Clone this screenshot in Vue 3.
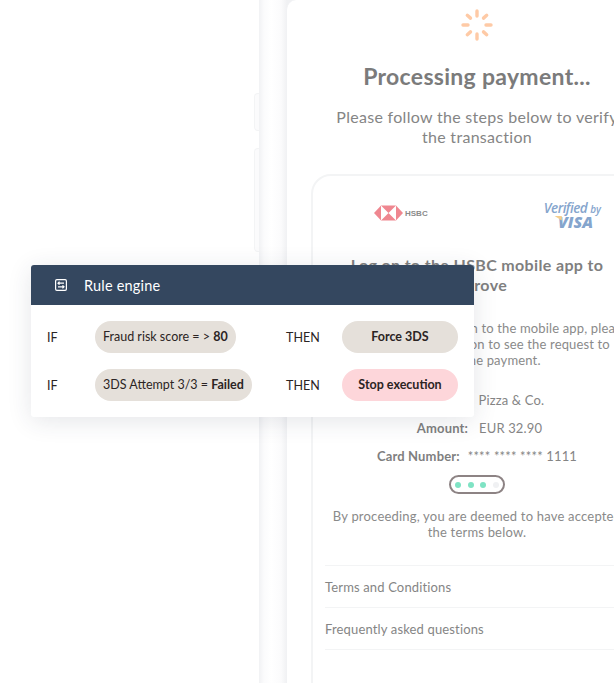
<template>
  <div class="stage">
    <div class="phone">
      <span class="side-btn side-btn-short"></span>
      <span class="side-btn side-btn-long"></span>
      <div class="screen">
        <svg class="spinner" width="32" height="32" viewBox="0 0 32 32" fill="none" stroke="#fecaa6" stroke-width="3.400" stroke-linecap="round">
          <path d="M16 2v5M16 25v5M2 16h5M25 16h5M6.300 6.300l3.200 2.800M22.500 22.900l3.200 2.800M25.700 6.300l-3.200 2.800M9.500 22.900l-3.200 2.800" />
        </svg>
        <h1 class="title">Processing payment...</h1>
        <p class="subtitle">Please follow the steps below to verify the transaction</p>

        <div class="card">
          <div class="logos">
            <div class="hsbc">
              <svg width="29" height="16" viewBox="0 0 29 16">
                <path fill="#ef8790" d="M0 8l7-7.500h15L29 8l-7 7.500H7z" />
                <path fill="#fff" d="M7 .5v15L14.500 8zM22 .5v15L14.500 8z" />
              </svg>
              <span class="hsbc-name">HSBC</span>
            </div>
            <div class="visa">
              <div class="visa-top">Verified <small>by</small></div>
              <div class="visa-name">VISA</div>
            </div>
          </div>

          <h2 class="card-title">Log on to the HSBC mobile app to approve</h2>
          <p class="card-text">
            When you have logged on to the mobile app, please<br />
            open up the notification to see the request to<br />
            approve the payment.
          </p>

          <dl class="details">
            <div class="detail"><dt>Merchant:</dt><dd>Pizza &amp; Co.</dd></div>
            <div class="detail detail-amount"><dt>Amount:</dt><dd>EUR 32.90</dd></div>
            <div class="detail"><dt>Card Number:</dt><dd>**** **** **** 1111</dd></div>
          </dl>

          <div class="progress">
            <i v-for="dot in dots" :key="dot.id" :class="['dot', { on: dot.on }]"></i>
          </div>

          <p class="terms-note">By proceeding, you are deemed to have accepted<br />the terms below.</p>

          <ul class="links">
            <li v-for="link in links" :key="link">{{ link }}</li>
          </ul>
        </div>
      </div>
    </div>

    <div class="rule-panel">
      <div class="rule-head">
        <svg width="14" height="14" viewBox="0 0 14 14" fill="none" stroke="#fff" stroke-width="1.200">
          <rect x="1.600" y="1.600" width="10.800" height="10.800" rx="1.300" />
          <path d="M4 5.200h6M5.500 3.700L4 5.200l1.500 1.500M10 8.800H4M8.500 7.300l1.500 1.500-1.500 1.500" />
        </svg>
        <span>Rule engine</span>
      </div>
      <div class="rule-body">
        <div v-for="rule in rules" :key="rule.condition" class="rule-row">
          <span class="word">IF</span>
          <span class="cond">{{ rule.condition }} <b>{{ rule.value }}</b></span>
          <span class="word">THEN</span>
          <span :class="['action', rule.tone]">{{ rule.action }}</span>
        </div>
      </div>
    </div>
  </div>
</template>

<script setup>
const dots = [
  { id: 1, on: true },
  { id: 2, on: true },
  { id: 3, on: true },
  { id: 4, on: false }
];

const links = ['Terms and Conditions', 'Frequently asked questions'];

const rules = [
  { condition: 'Fraud risk score = >', value: '80', action: 'Force 3DS', tone: 'neutral' },
  { condition: '3DS Attempt 3/3 =', value: 'Failed', action: 'Stop execution', tone: 'danger' }
];
</script>

<style>
html,
body {
  margin: 0;
  background: #fff;
}
</style>

<style scoped>
.stage {
  position: relative;
  width: 614px;
  height: 683px;
  overflow: hidden;
  background: #fff;
  font-family: "Lato", "Open Sans", sans-serif;
}

.phone {
  position: relative;
  width: 408px;
  height: 683px;
  margin-left: 259px;
  padding-left: 27px;
  box-sizing: border-box;
  background: linear-gradient(90deg, #f1f2f4 0, #fbfbfc 5px, #fff 12px, #fbfbfc 22px, #f0f1f3 28px);
}

.side-btn {
  position: absolute;
  left: -5px;
  width: 5px;
  box-sizing: border-box;
  border: 1px solid #f3f4f5;
  border-right: 0;
  border-radius: 4px 0 0 4px;
  background: #fbfbfc;
}

.side-btn-short {
  top: 93px;
  height: 38px;
}

.side-btn-long {
  top: 148px;
  height: 104px;
}

.screen {
  display: flex;
  flex-direction: column;
  align-items: center;
  height: 100%;
  box-sizing: border-box;
  padding: 9px 24px 0;
  background: #fff;
  border-left: 1px solid #f1f2f4;
  border-radius: 10px 0 0 0;
  color: #808080;
}

.spinner {
  flex: none;
}

.title {
  margin: 17px 0 0;
  font-size: 23px;
  line-height: 36px;
  font-weight: 700;
  letter-spacing: 0.3px;
  color: #7b7b7b;
  white-space: nowrap;
}

.subtitle {
  width: 300px;
  margin: 13px 0 0;
  font-size: 16px;
  line-height: 20px;
  text-align: center;
  letter-spacing: 0.3px;
  color: #858585;
}

.card {
  flex: none;
  width: 332px;
  height: 560px;
  margin-top: 27px;
  padding: 0 12px;
  box-sizing: border-box;
  border: 2px solid #f3f4f5;
  border-radius: 20px;
  display: flex;
  flex-direction: column;
  align-items: center;
}

.logos {
  display: flex;
  align-items: center;
  justify-content: space-between;
  align-self: stretch;
  height: 50px;
  margin-top: 12px;
  padding: 0 28px 0 49px;
}

.hsbc {
  display: flex;
  align-items: center;
  gap: 2px;
}

.hsbc-name {
  font-family: "Liberation Sans", sans-serif;
  font-size: 8px;
  font-weight: 700;
  color: #8a8a8a;
}

.visa {
  padding-top: 4px;
  font-family: "Open Sans", sans-serif;
  font-style: italic;
  text-align: right;
  color: #85a5cd;
}

.visa-top {
  font-size: 13.500px;
  line-height: 12px;
  font-weight: 600;
  letter-spacing: -0.5px;
  white-space: nowrap;
}

.visa-top small {
  font-size: 10px;
  letter-spacing: 0;
}

.visa-name {
  position: relative;
  margin-right: 8px;
  font-size: 16px;
  line-height: 14px;
  font-weight: 800;
}

.visa-name::before {
  content: "";
  position: absolute;
  top: 1px;
  left: 10px;
  width: 8px;
  height: 5px;
  background: #f5cf8e;
  clip-path: polygon(0 0, 100% 0, 100% 100%);
}

.card-title {
  width: 290px;
  margin: 17px 0 0;
  font-size: 16px;
  line-height: 20px;
  font-weight: 700;
  text-align: center;
  letter-spacing: 0.35px;
  color: #7f7f7f;
}

.card-text {
  margin: 25px -30px 0;
  font-size: 13px;
  line-height: 16px;
  text-align: center;
  letter-spacing: 0.15px;
  color: #8a8a8a;
  white-space: nowrap;
}

.details {
  margin: 18px 0 0;
  align-self: stretch;
}

.detail {
  display: flex;
  justify-content: center;
  gap: 8px;
  height: 28px;
  align-items: center;
  font-size: 13px;
  letter-spacing: 0.15px;
}

.detail-amount {
  gap: 11px;
  padding-left: 5px;
}

.detail dt {
  font-weight: 700;
  color: #7f7f7f;
}

.detail dd {
  margin: 0;
  color: #858585;
}

.progress {
  display: flex;
  align-items: center;
  justify-content: center;
  gap: 6.500px;
  width: 56px;
  height: 19px;
  margin-top: 5px;
  box-sizing: border-box;
  border: 2px solid #8d8384;
  border-radius: 10px;
}

.dot {
  width: 6px;
  height: 6px;
  border-radius: 50%;
  background: #f0f1f3;
}

.dot.on {
  background: #7fe3c4;
}

.terms-note {
  margin: 14px -30px 0;
  font-size: 13px;
  line-height: 16px;
  text-align: center;
  letter-spacing: 0.2px;
  color: #8a8a8a;
  white-space: nowrap;
}

.links {
  list-style: none;
  align-self: stretch;
  margin: 25px 0 0;
  padding: 0;
  border-top: 1px solid #f3f4f5;
}

.links li {
  height: 41px;
  line-height: 43px;
  box-sizing: content-box;
  border-bottom: 1px solid #f3f4f5;
  font-size: 13px;
  letter-spacing: 0.15px;
  color: #858585;
}

.rule-panel {
  position: absolute;
  left: 31px;
  top: 265px;
  width: 443px;
  background: #fff;
  border-radius: 3px;
  overflow: hidden;
  box-shadow: 0 4px 24px rgba(40, 50, 70, 0.12);
}

.rule-head {
  display: flex;
  align-items: center;
  gap: 16px;
  height: 40px;
  padding-left: 23px;
  background: #34475f;
  color: #fff;
  font-size: 14.500px;
  letter-spacing: 0.2px;
}

.rule-body {
  display: grid;
  gap: 16px;
  padding: 16px;
}

.rule-row {
  display: grid;
  grid-template-columns: 48px 191px 56px 116px;
  align-items: center;
  height: 32px;
  font-size: 12.500px;
  color: #2b2424;
}

.cond {
  justify-self: start;
  height: 32px;
  line-height: 32px;
  padding: 0 8px;
  border-radius: 16px;
  background: #e5e0da;
  white-space: nowrap;
}

.cond b {
  font-weight: 700;
}

.action {
  height: 32px;
  line-height: 32px;
  border-radius: 16px;
  text-align: center;
  font-weight: 700;
}

.action.neutral {
  background: #e5e0da;
}

.action.danger {
  background: #fdd6da;
}
</style>
